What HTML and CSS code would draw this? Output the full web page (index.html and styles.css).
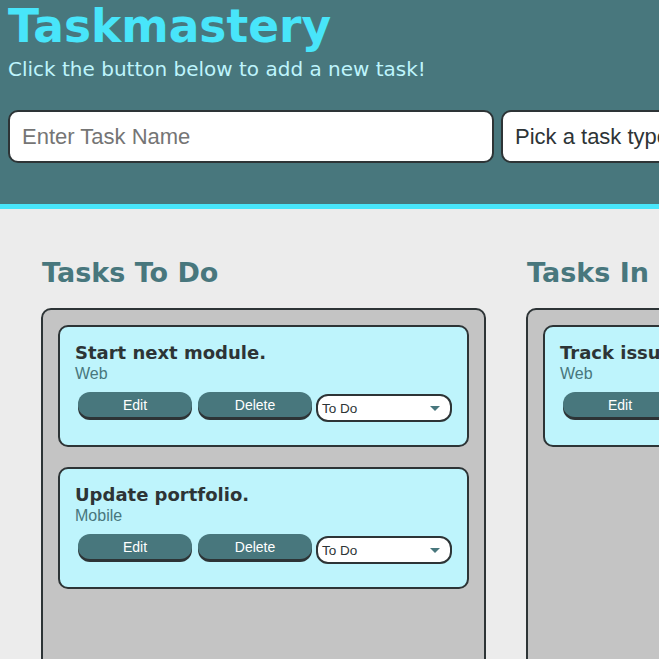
FILE: index.html
```html
<!DOCTYPE html>
<html lang="en">
<head>
<meta charset="utf-8">
<title>Taskmastery</title>
<link rel="stylesheet" href="styles.css">
</head>
<body>
<header class="header">
  <h1 class="title">Taskmastery</h1>
  <p class="subtitle">Click the button below to add a new task!</p>
  <form class="task-form">
    <input class="task-input" type="text" placeholder="Enter Task Name">
    <div class="type-select">Pick a task type</div>
  </form>
</header>
<main class="board">
  <section class="column">
    <h2 class="column-title">Tasks To Do</h2>
    <div class="column-box">
      <div class="card">
        <h3 class="card-title">Start next module.</h3>
        <p class="card-type">Web</p>
        <div class="card-actions">
          <button class="btn">Edit</button>
          <button class="btn">Delete</button>
          <div class="status"><span>To Do</span><span class="caret"></span></div>
        </div>
      </div>
      <div class="card">
        <h3 class="card-title">Update portfolio.</h3>
        <p class="card-type">Mobile</p>
        <div class="card-actions">
          <button class="btn">Edit</button>
          <button class="btn">Delete</button>
          <div class="status"><span>To Do</span><span class="caret"></span></div>
        </div>
      </div>
    </div>
  </section>
  <section class="column">
    <h2 class="column-title">Tasks In Progress</h2>
    <div class="column-box">
      <div class="card">
        <h3 class="card-title">Track issues.</h3>
        <p class="card-type">Web</p>
        <div class="card-actions">
          <button class="btn">Edit</button>
          <button class="btn">Delete</button>
          <div class="status"><span>In Progress</span><span class="caret"></span></div>
        </div>
      </div>
    </div>
  </section>
</main>
</body>
</html>
```
FILE: styles.css
```css
html, body {
  margin: 0;
  padding: 0;
  overflow: hidden;
  background: #ececec;
}
body {
  font-family: "DejaVu Sans", Verdana, sans-serif;
  width: 659px;
  height: 659px;
}
.header {
  background: #48777d;
  height: 204px;
  border-bottom: 5px solid #48e5fa;
  padding: 0 0 0 8px;
  box-sizing: content-box;
  overflow: hidden;
}
.title {
  margin: 0;
  font-size: 45.5px;
  line-height: 54px;
  color: #48e5fa;
  font-weight: bold;
}
.subtitle {
  margin: 0;
  font-size: 20px;
  line-height: 30px;
  color: #bef4fc;
}
.task-form {
  display: flex;
  gap: 7px;
  margin-top: 26px;
  width: 1000px;
}
.task-input, .type-select {
  box-sizing: border-box;
  height: 53px;
  border: 2px solid #2d3436;
  border-radius: 10px;
  background: #fff;
  font-family: "Liberation Sans", Arial, sans-serif;
  font-size: 22px;
  padding: 0 12px;
}
.task-input {
  width: 486px;
  outline: none;
}
.task-input::placeholder {
  color: #757575;
}
.type-select {
  width: 300px;
  display: flex;
  align-items: center;
  color: #2d3436;
}
.board {
  display: flex;
  gap: 40px;
  padding: 40px 0 0 41px;
  width: 1200px;
}
.column {
  flex: 0 0 445px;
}
.column-title {
  margin: 8px 0 0 1px;
  font-size: 27px;
  line-height: 32px;
  color: #48777d;
  font-weight: bold;
  white-space: nowrap;
}
.column-box {
  margin-top: 19px;
  box-sizing: border-box;
  height: 400px;
  background: #c4c4c4;
  border: 2px solid #2d3436;
  border-radius: 10px;
  padding: 15px;
  display: flex;
  flex-direction: column;
  gap: 20px;
}
.card {
  box-sizing: border-box;
  height: 122px;
  background: #bef4fc;
  border: 2px solid #2d3436;
  border-radius: 10px;
  padding: 14px 15px 0 15px;
}
.card-title {
  margin: 0;
  font-size: 18px;
  line-height: 24px;
  font-weight: bold;
  color: #2d3436;
  white-space: nowrap;
}
.card-type {
  margin: 0;
  font-family: "Liberation Sans", Arial, sans-serif;
  font-size: 16px;
  line-height: 18px;
  color: #48777d;
}
.card-actions {
  display: flex;
  align-items: flex-start;
  margin-top: 9px;
  padding-left: 3px;
}
.btn {
  box-sizing: border-box;
  width: 114px;
  height: 25px;
  margin-right: 6px;
  border: none;
  border-radius: 12px;
  background: #48777d;
  box-shadow: 0 3px 0 #2d3436;
  color: #fff;
  font-family: "Liberation Sans", Arial, sans-serif;
  font-size: 14px;
  padding: 0;
  flex: 0 0 auto;
}
.btn + .btn {
  margin-right: 4px;
}
.status {
  box-sizing: border-box;
  flex: 0 0 136px;
  height: 28px;
  margin-top: 2px;
  background: #fff;
  border: 2px solid #2d3436;
  border-radius: 12px;
  display: flex;
  align-items: center;
  justify-content: space-between;
  padding: 0 10px 0 4px;
  font-family: "Liberation Sans", Arial, sans-serif;
  font-size: 13.5px;
  color: #2d3436;
}
.caret {
  width: 0;
  height: 0;
  border-left: 5px solid transparent;
  border-right: 5px solid transparent;
  border-top: 5px solid #48777d;
}
```
